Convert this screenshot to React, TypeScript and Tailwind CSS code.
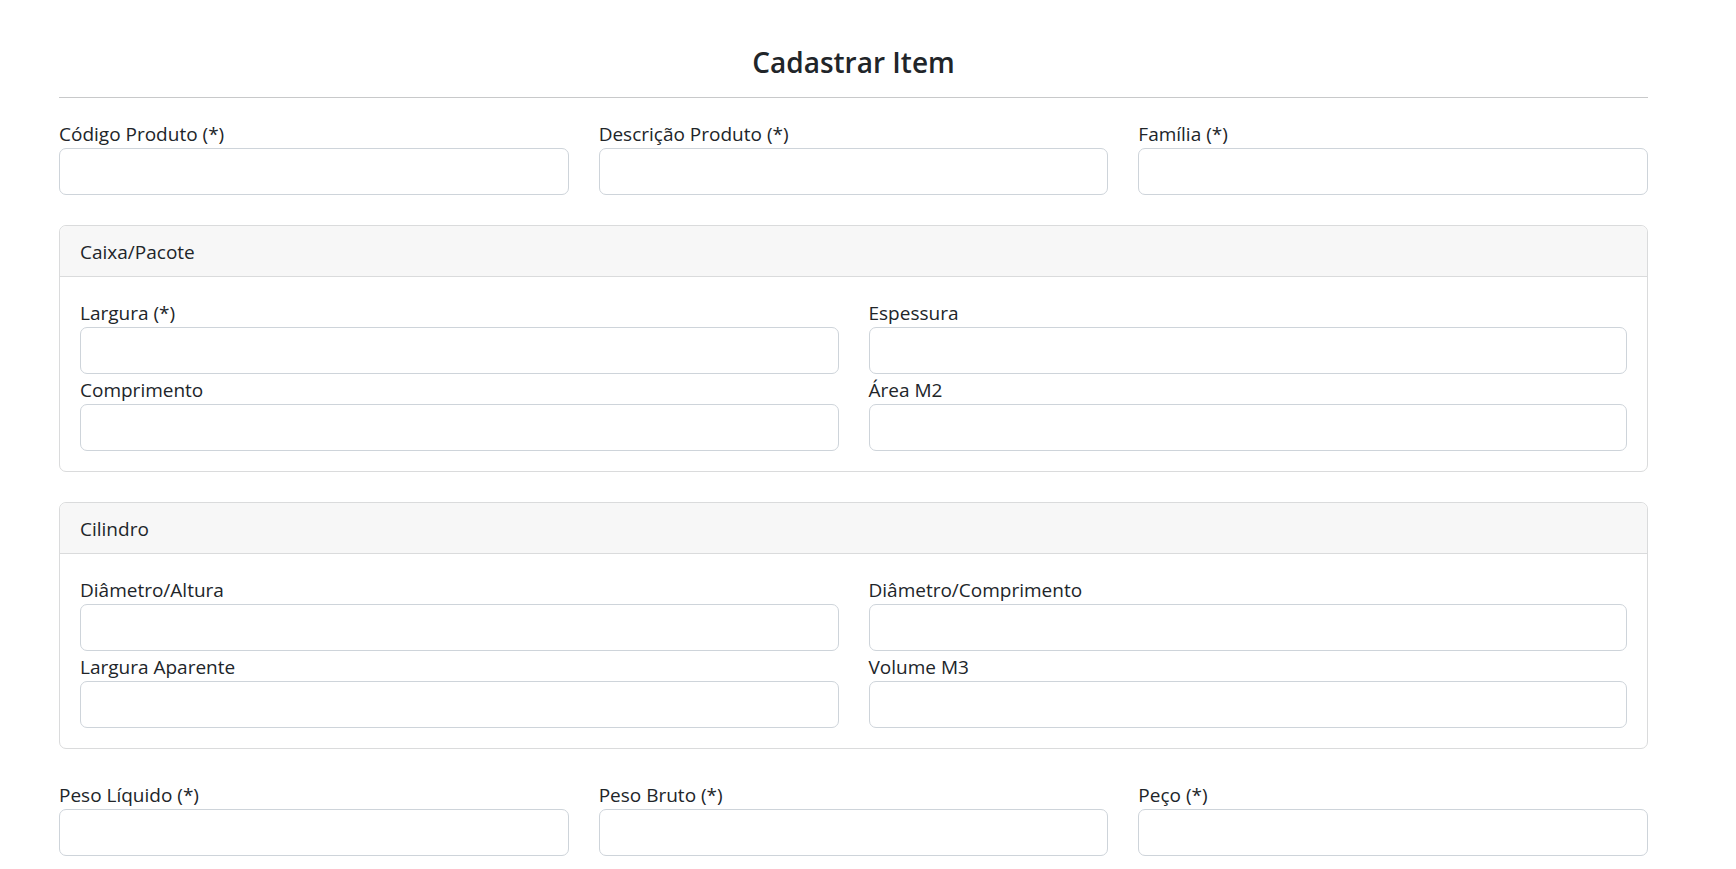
import React from "react"

function Field({ label }: { label: string }) {
  return (
    <div className="flex flex-col">
      <label className="pt-[2px] leading-[28px]">{label}</label>
      <input
        type="text"
        className="h-[47px] w-full rounded-[7px] border border-[#ced4da] bg-white px-[15px] outline-none"
      />
    </div>
  )
}

function Card({ title, fields }: { title: string; fields: string[] }) {
  return (
    <div className="mt-[30px] rounded-[7px] border border-[#dadbdc]">
      <div className="rounded-t-[7px] border-b border-[#dadbdc] bg-[#f7f7f7] px-[20px] pt-[11px] pb-[9px] leading-[30px]">
        {title}
      </div>
      <div className="grid grid-cols-2 gap-x-[30px] p-[20px]">
        {fields.map((f) => (
          <Field key={f} label={f} />
        ))}
      </div>
    </div>
  )
}

export default function App() {
  return (
    <div
      className="min-h-screen bg-white text-[19px] text-[#212529]"
      style={{ fontFamily: '"Open Sans", "Noto Sans", sans-serif' }}
    >
      <div className="ml-[59px] w-[1589px] pb-[13px]">
        <h3 className="pt-[44px] text-center text-[28px] font-semibold leading-[36px]">Cadastrar Item</h3>
        <hr className="mt-[17px] mb-[20px] border-t border-[#c8c9ca]" />

        <div className="grid grid-cols-3 gap-x-[30px]">
          <Field label="Código Produto (*)" />
          <Field label="Descrição Produto (*)" />
          <Field label="Família (*)" />
        </div>

        <Card title="Caixa/Pacote" fields={["Largura (*)", "Espessura", "Comprimento", "Área M2"]} />
        <Card
          title="Cilindro"
          fields={["Diâmetro/Altura", "Diâmetro/Comprimento", "Largura Aparente", "Volume M3"]}
        />

        <div className="mt-[30px] grid grid-cols-3 gap-x-[30px]">
          <Field label="Peso Líquido (*)" />
          <Field label="Peso Bruto (*)" />
          <Field label="Peço (*)" />
        </div>
      </div>
    </div>
  )
}
